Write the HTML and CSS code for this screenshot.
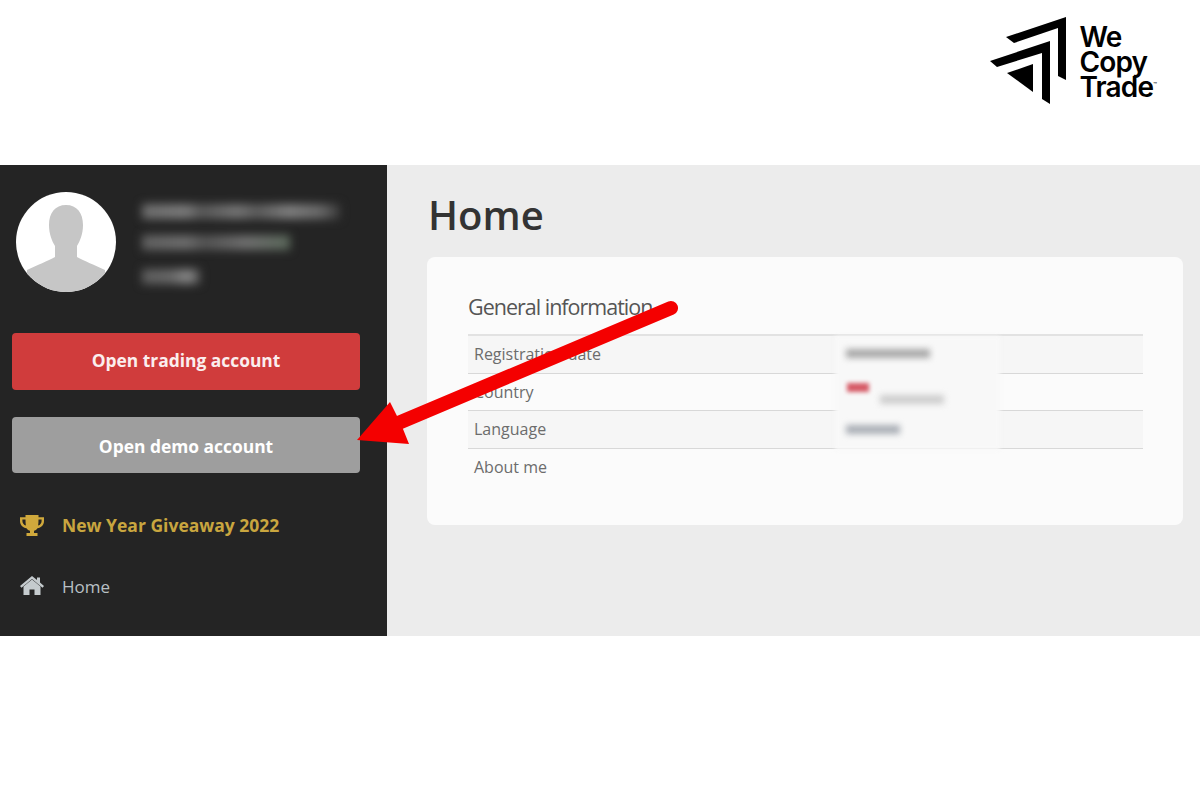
FILE: index.html
```html
<!DOCTYPE html>
<html>
<head>
  <title>Home</title>
  <link rel="stylesheet" href="styles.css">
</head>
<body>
  <header class="top-bar">
    <div class="logo">
      <svg class="logo-mark" width="78" height="90" viewBox="990 15 78 90">
        <polygon points="1007,37 1067,17 1067,80 1059,76 1059,28 1015,43"/>
        <polygon points="991,61 1051,41 1051,104 1043,99 1043,53 998,67"/>
        <polygon points="1008,73 1034,64 1034,92"/>
      </svg>
      <div class="logo-text">We<br>Copy<br>Trade<sup>™</sup></div>
    </div>
  </header>

  <div class="app">
    <aside class="sidebar">
      <div class="profile">
        <svg class="avatar" width="100" height="100" viewBox="0 0 100 100">
          <circle cx="50" cy="50" r="50" fill="#fff"/>
          <clipPath id="avatarClip"><circle cx="50" cy="50" r="50"/></clipPath>
          <path clip-path="url(#avatarClip)" fill="#c6c6c6" d="M50 13c-11 0-17 8-17 20 0 9 3 16 6 21v11c-7 4-18 8-28 13v27h78V78c-10-5-21-9-28-13V54c3-5 6-12 6-21 0-12-6-20-17-20z"/>
        </svg>
        <div class="profile-info">
          <div class="smudge smudge-1"></div>
          <div class="smudge smudge-2"></div>
          <div class="smudge smudge-3"></div>
        </div>
      </div>

      <a class="btn btn-red">Open trading account</a>
      <a class="btn btn-gray">Open demo account</a>

      <nav class="menu">
        <a class="menu-item menu-gold">
          <svg width="24" height="23" viewBox="0 0 24 23">
            <path fill="#d0a93c" d="M5.500 1h13v2.200H24V7c0 4-3 6.800-6.500 7.300-1 1.300-2.200 2.200-3.500 2.500V19h3.500v3h-11v-3H10v-2.200c-1.300-.3-2.500-1.200-3.500-2.500C3 13.800 0 11 0 7V3.200h5.500V1zM2.400 5.500V7c0 2.200 1.300 3.900 3.500 4.600-.3-1.800-.4-3.900-.4-6.100H2.400zm19.200 0h-3.100c0 2.200-.1 4.300-.4 6.100 2.200-.7 3.500-2.400 3.500-4.600V5.500z"/>
          </svg>
          <span>New Year Giveaway 2022</span>
        </a>
        <a class="menu-item">
          <svg width="24" height="20" viewBox="0 0 24 20">
            <path fill="#c5cbce" d="M12 3.500 3.500 10.500V19h6v-5.500h5V19h6v-8.500z"/>
            <path fill="#c5cbce" d="M12 0 0 10l1.500 1.700L12 3l10.500 8.700L24 10l-4-3.400V1.500h-3v2.600z"/>
          </svg>
          <span>Home</span>
        </a>
      </nav>
    </aside>

    <main class="content">
      <h1>Home</h1>
      <section class="card">
        <h3>General information</h3>
        <div class="info-row">
          <span class="info-label">Registration date</span>
          <div class="value-blur value-1"></div>
        </div>
        <div class="info-row">
          <span class="info-label">Country</span>
          <div class="flag-blur"></div>
          <div class="value-blur value-2"></div>
        </div>
        <div class="info-row">
          <span class="info-label">Language</span>
          <div class="value-blur value-3"></div>
        </div>
        <div class="info-row">
          <span class="info-label">About me</span>
        </div>
        <div class="values-patch"></div>
      </section>
    </main>
  </div>

  <svg class="arrow" width="1200" height="800" viewBox="0 0 1200 800">
    <line x1="671" y1="308" x2="396" y2="424" stroke="#f40000" stroke-width="14" stroke-linecap="round"/>
    <polygon fill="#f40000" points="357,440 390,402 397,416 403,429 409,444"/>
  </svg>
</body>
</html>
```

FILE: styles.css
```css
html, body {
  margin: 0;
  padding: 0;
}

body {
  background-color: #fff;
  font-family: "Open Sans", Arial, sans-serif;
  height: 800px;
  overflow: hidden;
}

.top-bar {
  height: 165px;
  display: flex;
  justify-content: flex-end;
}

.logo {
  display: flex;
  align-items: flex-start;
  gap: 12px;
  margin: 15px 43px 0 0;
}

.logo-mark {
  display: block;
}

.logo-text {
  margin-top: 10px;
  font-family: Inter, Arial, sans-serif;
  font-weight: 600;
  font-size: 28px;
  line-height: 25px;
  letter-spacing: -0.8px;
  color: #000;
}

.logo-text sup {
  font-size: 6px;
  font-weight: 500;
  letter-spacing: 0;
  vertical-align: 10px;
  line-height: 0;
}

.app {
  height: 471px;
  display: flex;
  background-color: #ececec;
}

.sidebar {
  width: 387px;
  flex-shrink: 0;
  box-sizing: border-box;
  padding: 27px 27px 0 12px;
  background-color: #242424;
}

.profile {
  display: flex;
  padding-left: 4px;
  gap: 26px;
  height: 141px;
}

.avatar {
  display: block;
}

.profile-info {
  padding-top: 12px;
}

.smudge {
  height: 15px;
  filter: blur(5px);
  margin-bottom: 16px;
}

.smudge-1 {
  width: 198px;
  background-image: linear-gradient(90deg, #6e6e6e 0, #7c7c7c 22%, #585858 30%, #767676 48%, #5c5c5c 58%, #808080 74%, #6a6a6a 90%, #3a3a3a 100%);
}

.smudge-2 {
  width: 148px;
  margin-bottom: 19px;
  background-image: linear-gradient(90deg, #626262 0, #6e6e6e 30%, #545454 42%, #707070 70%, #5c6a5c 100%);
}

.smudge-3 {
  width: 58px;
  background-image: linear-gradient(90deg, #5e5e5e 0, #686868 50%, #8a8a8a 80%, #505050 100%);
}

.btn {
  display: block;
  text-align: center;
  color: #fbeeee;
  font-weight: 700;
  font-size: 17.4px;
  border-radius: 4px;
}

.btn-red {
  background-color: #d03c3c;
  height: 57px;
  line-height: 55px;
  margin-bottom: 27px;
}

.btn-gray {
  background-color: #9e9e9e;
  color: #fff;
  height: 56px;
  line-height: 58px;
}

.menu {
  margin-top: 32px;
}

.menu-item {
  display: flex;
  align-items: center;
  height: 40px;
  margin-bottom: 21px;
  padding-left: 8px;
  gap: 18px;
  color: #b9c0c4;
  font-size: 17px;
}

.menu-gold {
  color: #c9a63f;
  font-weight: 700;
  font-size: 17.5px;
}

.content {
  flex: 1;
  padding: 0 17px 0 40px;
}

h1 {
  margin: 25px 0 17px 1px;
  font-size: 40px;
  line-height: 50px;
  font-weight: 600;
  color: #333;
}

.card {
  position: relative;
  height: 268px;
  box-sizing: border-box;
  padding: 36px 40px 0 41px;
  background-color: #fbfbfb;
  border-radius: 8px;
}

h3 {
  margin: 0 0 13px;
  font-size: 21.5px;
  line-height: 28px;
  font-weight: 400;
  letter-spacing: -1px;
  color: #555;
}

.info-row {
  position: relative;
  height: 36.5px;
  padding-left: 6px;
  border-top: 1px solid #d8d8d8;
  line-height: 36.5px;
  font-size: 16px;
  color: #6c6c6c;
}

.info-row:nth-of-type(odd) {
  background-color: #f6f6f6;
}

.info-row:last-of-type {
  background-color: transparent;
}

.info-row:first-of-type {
  border-top: 2px solid #e2e2e2;
}

.values-patch {
  position: absolute;
  left: 408px;
  top: 79px;
  width: 165px;
  height: 114px;
  background-color: #f8f8f8;
  filter: blur(2px);
}

.value-blur {
  position: absolute;
  z-index: 1;
  left: 378px;
  height: 9px;
  background-color: #a8a8a8;
  filter: blur(3px);
}

.value-1 { top: 13px; width: 84px; }
.value-2 { top: 21px; width: 64px; left: 412px; background-color: #cdcdcd; }
.value-3 { top: 14px; width: 54px; background-color: #a9aeb5; }

.flag-blur {
  position: absolute;
  z-index: 1;
  left: 379px;
  top: 9px;
  width: 22px;
  height: 9px;
  background-color: #d65a66;
  filter: blur(2px);
}

.arrow {
  position: absolute;
  left: 0;
  top: 0;
  pointer-events: none;
  z-index: 2;
}
```
